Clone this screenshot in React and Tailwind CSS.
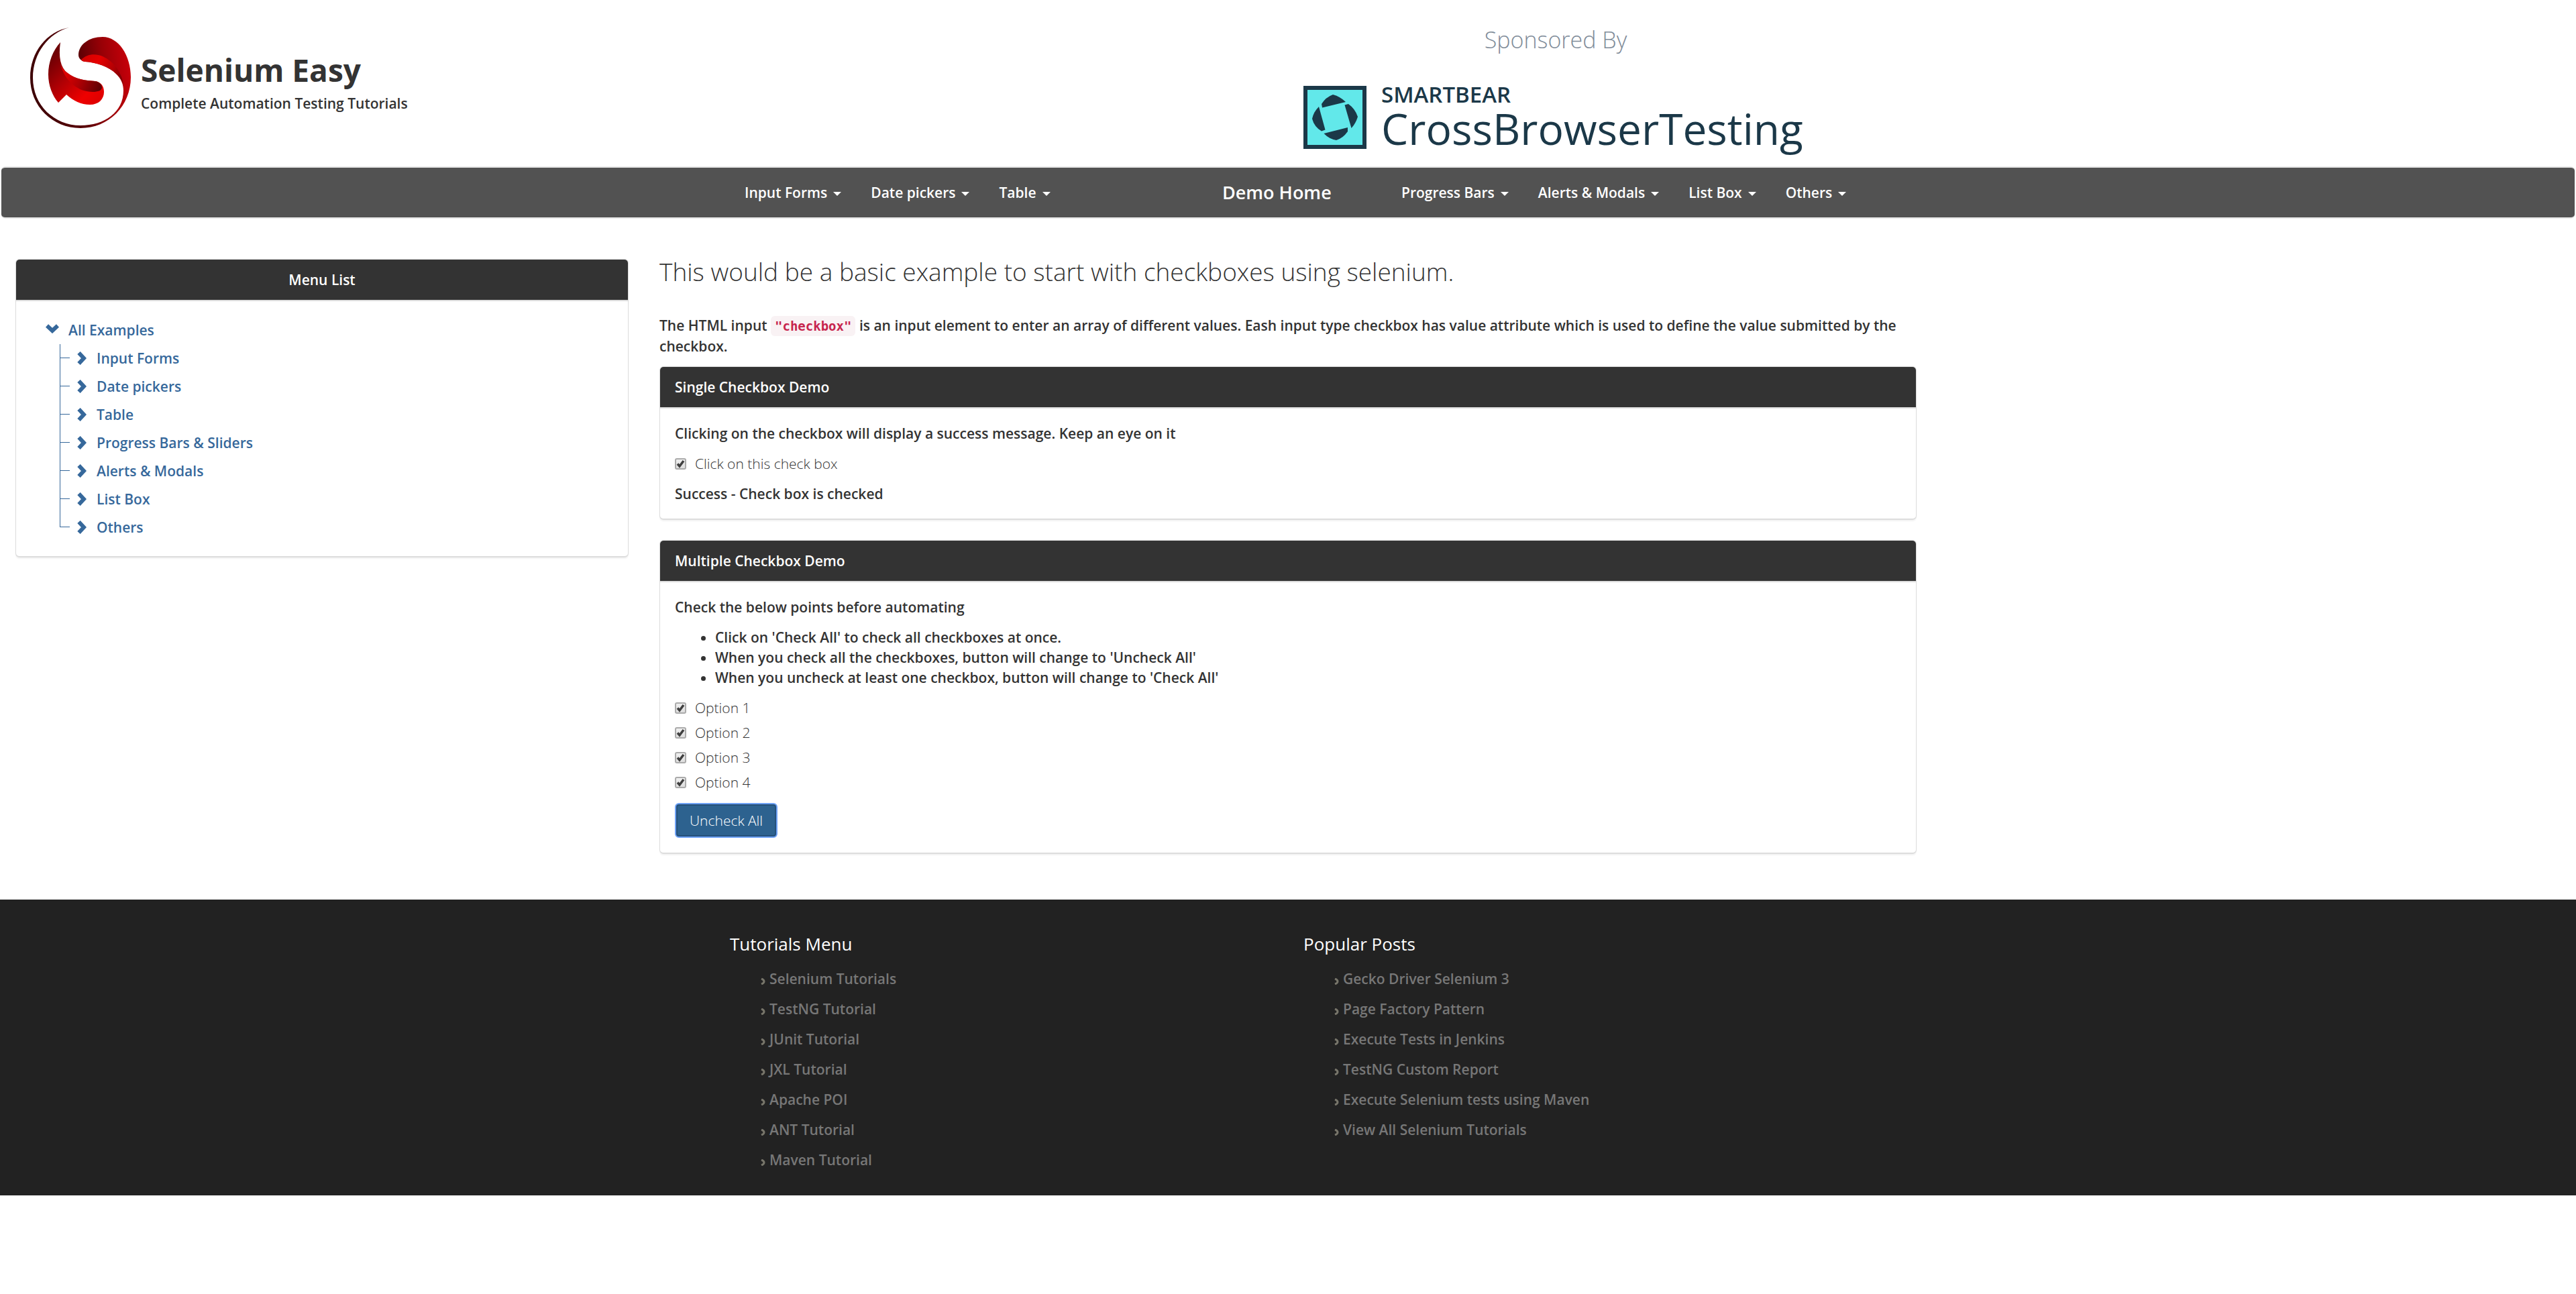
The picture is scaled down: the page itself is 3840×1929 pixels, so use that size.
import { useState } from "react";

const leftNav = ["Input Forms", "Date pickers", "Table"];
const rightNav = ["Progress Bars", "Alerts & Modals", "List Box", "Others"];
const treeItems = [
  "Input Forms",
  "Date pickers",
  "Table",
  "Progress Bars & Sliders",
  "Alerts & Modals",
  "List Box",
  "Others",
];
const tutorials = [
  "Selenium Tutorials",
  "TestNG Tutorial",
  "JUnit Tutorial",
  "JXL Tutorial",
  "Apache POI",
  "ANT Tutorial",
  "Maven Tutorial",
];
const posts = [
  "Gecko Driver Selenium 3",
  "Page Factory Pattern",
  "Execute Tests in Jenkins",
  "TestNG Custom Report",
  "Execute Selenium tests using Maven",
  "View All Selenium Tutorials",
];

function SiteLogo() {
  return (
    <svg viewBox="0 0 150 150" className="size-[150px] shrink-0" aria-hidden="true">
      <defs>
        <linearGradient id="ring" gradientUnits="userSpaceOnUse" x1="0" y1="80" x2="150" y2="60">
          <stop offset="0" stopColor="#3c0004" />
          <stop offset="0.5" stopColor="#5a0004" />
          <stop offset="0.75" stopColor="#9a0006" />
          <stop offset="1" stopColor="#c8000a" />
        </linearGradient>
        <linearGradient id="topFold" gradientUnits="userSpaceOnUse" x1="76" y1="44" x2="142" y2="76">
          <stop offset="0" stopColor="#d00000" />
          <stop offset="0.35" stopColor="#e60000" />
          <stop offset="0.7" stopColor="#b00004" />
          <stop offset="1" stopColor="#6a0004" />
        </linearGradient>
        <linearGradient id="inner" gradientUnits="userSpaceOnUse" x1="26" y1="50" x2="95" y2="115">
          <stop offset="0" stopColor="#6e0004" />
          <stop offset="0.4" stopColor="#b00004" />
          <stop offset="0.8" stopColor="#ee0000" />
          <stop offset="1" stopColor="#e00000" />
        </linearGradient>
        <linearGradient id="innerFold" gradientUnits="userSpaceOnUse" x1="48" y1="66" x2="106" y2="92">
          <stop offset="0" stopColor="#e80000" />
          <stop offset="0.45" stopColor="#b00004" />
          <stop offset="1" stopColor="#5c0004" />
        </linearGradient>
      </defs>
      <path
        d="M58 0C25 6 0 36 0 75c0 42 33 75 75 75s75-33 75-76c0-32-18-60-42-60-21 0-36 12-36 27 0 5 4 9 10 10 16 1 35 7 46 18 8 8 11 16 11 25 0 32-28 52-64 52C36 146 4 116 4 75 4 38 28 8 58 0Z"
        fill="url(#ring)"
      />
      <path d="M76 48c8-8 20-10 32-5 18 8 31 28 31 46 0-7-4-14-11-20C117 58 98 52 82 51c-3 0-5-1-6-3Z" fill="url(#topFold)" />
      <path
        d="M45 22C34 34 27 51 27 70c0 16 6 32 15 42l12-12c10 9 22 15 35 15 13 0 21-8 21-19 0-9-5-15-13-16-15-1-30-3-41-12-11-8-14-24-11-46Z"
        fill="url(#inner)"
      />
      <path d="M45 54c2 6 6 11 11 14 11 9 26 11 41 12 6 1 10 5 10 9 0 5-6 7-14 7-20 0-41-14-48-42Z" fill="url(#innerFold)" />
    </svg>
  );
}

function SponsorMark() {
  return (
    <svg viewBox="0 0 94 94" className="size-[94px] shrink-0" aria-hidden="true">
      <rect width="94" height="94" fill="#1b3848" />
      <rect x="6" y="6" width="82" height="82" fill="#62e8ea" />
      <g fill="#1b3848">
        <path d="M44 13Q55 16 63 24L28 32.500L27 27Q33 17 44 13Z" />
        <path d="M67 27Q77 34 81 46Q78 56 71.500 63L61.500 28.500Z" />
        <path d="M66 62L66 68Q59 78 49 81Q38 79 30.500 71Z" />
        <path d="M23 31L32.500 65.500L27 67.500Q16 61 13 49Q15 39 23 31Z" />
      </g>
    </svg>
  );
}

function NavLinks({ items }) {
  return (
    <ul className="flex items-center gap-11 text-[21px] font-semibold">
      {items.map((item) => (
        <li key={item}>
          <a href="#" className="flex items-center gap-[9px] whitespace-nowrap">
            {item}
            <svg viewBox="0 0 12 6" className="mt-1 h-1.5 w-3" aria-hidden="true">
              <path d="M0 0h12L6 6Z" fill="currentColor" />
            </svg>
          </a>
        </li>
      ))}
    </ul>
  );
}

function Panel({ title, centered, children }) {
  return (
    <section className="rounded-md border border-b-2 border-[#ddd] bg-white shadow-[0_2px_2px_rgba(0,0,0,0.05)]">
      <h3
        className={
          "rounded-t-[5px] border-b-2 border-[#ddd] bg-[#333] px-[22px] py-[15px] font-semibold text-white" +
          (centered ? " text-center" : "")
        }
      >
        {title}
      </h3>
      <div className="px-[22px] py-[22px]">{children}</div>
    </section>
  );
}

function CheckItem({ label, checked, onChange }) {
  return (
    <label className="flex items-center gap-[13px] font-light">
      <span className="grid">
        <input
          type="checkbox"
          checked={checked}
          onChange={onChange}
          className="peer col-start-1 row-start-1 size-[17px] appearance-none rounded-[3px] border-2 border-[#ababab] bg-linear-to-b from-[#f0f0f0] to-[#dedede]"
        />
        <svg
          viewBox="0 0 17 17"
          className="pointer-events-none invisible col-start-1 row-start-1 size-[17px] peer-checked:visible"
          aria-hidden="true"
        >
          <path d="M4 8.500l3 3.500L13 4" fill="none" stroke="#3f3f3f" strokeWidth="3.500" />
        </svg>
      </span>
      {label}
    </label>
  );
}

function FooterColumn({ title, items }) {
  return (
    <div className="px-[23px]">
      <h4 className="text-[26px] leading-[30px] text-white">{title}</h4>
      <ul className="mt-[22px] flex flex-col gap-[15px] pl-[46px] font-semibold text-[#777]">
        {items.map((item) => (
          <li key={item}>
            <a href="#" className="flex items-center gap-1.5">
              <svg viewBox="0 0 7 10" className="mt-2 h-2.5 w-[7px]" aria-hidden="true">
                <path d="M1 1q4 1.500 4 4T1 9" fill="none" stroke="#77756a" strokeWidth="3" />
              </svg>
              {item}
            </a>
          </li>
        ))}
      </ul>
    </div>
  );
}

export default function App() {
  const [single, setSingle] = useState(true);
  const [options, setOptions] = useState([true, true, true, true]);
  const all = options.every(Boolean);

  return (
    <div className="min-h-screen bg-white font-['Open_Sans',sans-serif] text-[21px] leading-[30px] text-[#333]">
      <header className="grid h-[248px] grid-cols-2">
        <div className="flex items-start gap-[15px] pt-[41px] pl-[45px]">
          <SiteLogo />
          <div className="pt-7">
            <h1 className="text-[46px] leading-[70px] font-bold">Selenium Easy</h1>
            <p className="font-semibold">Complete Automation Testing Tutorials</p>
          </div>
        </div>
        <div className="pt-[39px] pl-[23px] text-[#1b3848]">
          <div className="flex w-[752px] flex-col">
            <p className="text-center text-[34px] leading-[40px] font-light text-[#7f8c99]">Sponsored By</p>
            <a href="#" className="mt-[41px] flex items-end gap-[22px]">
              <SponsorMark />
              <span className="flex flex-col">
                <span className="text-[33px] leading-[42px] font-semibold">SMARTBEAR</span>
                <span className="text-[64px] leading-[60px]">CrossBrowserTesting</span>
              </span>
            </a>
          </div>
        </div>
      </header>

      <nav className="mx-0.5 rounded-md border-y-2 border-[#e7e7e7] bg-[#525252] text-white">
        <div className="mx-auto grid h-[74px] max-w-[1710px] grid-cols-[712px_267px_1fr] items-center pl-[45px]">
          <NavLinks items={leftNav} />
          <a href="#" className="text-[27px] font-semibold">
            Demo Home
          </a>
          <NavLinks items={rightNav} />
        </div>
      </nav>

      <main className="grid grid-cols-4 items-start pt-[60px] pb-[68px]">
        <aside className="px-[23px]">
          <Panel title="Menu List" centered>
            <div className="pl-[22px] leading-[42px] font-semibold text-[#36689b]">
              <a href="#" className="flex items-center gap-3.5">
                <svg viewBox="0 0 20 14" className="-mt-1 h-3.5 w-5" aria-hidden="true">
                  <path d="M2 2.500l8 7.500 8-7.500" fill="none" stroke="currentColor" strokeWidth="6" />
                </svg>
                All Examples
              </a>
              <ul className="pl-[21px]">
                {treeItems.map((item, i) => (
                  <li key={item} className="flex">
                    <span className="flex w-[15px] flex-col" aria-hidden="true">
                      <span className="h-[21px] border-b border-l border-[#36689b]" />
                      <span className={i < treeItems.length - 1 ? "h-[21px] border-l border-[#36689b]" : "h-[21px]"} />
                    </span>
                    <a href="#" className="flex items-center gap-[15px] pl-[11px]">
                      <svg viewBox="0 0 14 20" className="h-5 w-3.5" aria-hidden="true">
                        <path d="M2.500 2l7.500 8-7.500 8" fill="none" stroke="currentColor" strokeWidth="6" />
                      </svg>
                      {item}
                    </a>
                  </li>
                ))}
              </ul>
            </div>
          </Panel>
        </aside>

        <div className="col-span-2 px-[23px]">
          <h2 className="text-[37px] leading-[38px] font-light">
            This would be a basic example to start with checkboxes using selenium.
          </h2>
          <p className="mt-[46px] font-semibold">
            The HTML input{" "}
            <code className="rounded-md bg-[#f9f2f4] px-1.5 py-1 font-['DejaVu_Sans_Mono',monospace] text-[19px] text-[#c7254e]">
              "checkbox"
            </code>{" "}
            is an input element to enter an array of different values. Eash input type checkbox has value attribute
            which is used to define the value submitted by the checkbox.
          </p>

          <div className="mt-[15px] flex flex-col gap-[30px]">
            <Panel title="Single Checkbox Demo">
              <div className="flex flex-col gap-[15px]">
                <p className="font-semibold">
                  Clicking on the checkbox will display a success message. Keep an eye on it
                </p>
                <CheckItem label="Click on this check box" checked={single} onChange={() => setSingle(!single)} />
                {single && <p className="font-semibold">Success - Check box is checked</p>}
              </div>
            </Panel>

            <Panel title="Multiple Checkbox Demo">
              <p className="font-semibold">Check the below points before automating</p>
              <ul className="mt-[15px] list-disc pl-[60px] font-semibold">
                <li>Click on 'Check All' to check all checkboxes at once.</li>
                <li>When you check all the checkboxes, button will change to 'Uncheck All'</li>
                <li>When you uncheck at least one checkbox, button will change to 'Check All'</li>
              </ul>
              <div className="mt-[15px] flex flex-col gap-[7px]">
                {options.map((on, i) => (
                  <CheckItem
                    key={i}
                    label={"Option " + (i + 1)}
                    checked={on}
                    onChange={() => setOptions(options.map((o, j) => (j === i ? !o : o)))}
                  />
                ))}
              </div>
              <button
                type="button"
                onClick={() => setOptions(options.map(() => !all))}
                className="mt-4 block h-[52px] rounded-md border-2 border-[#6ea2f5] bg-[#2d628f] px-5 font-light text-white shadow-[inset_0_0_0_2px_#24507a]"
              >
                {all ? "Uncheck All" : "Check All"}
              </button>
            </Panel>
          </div>
        </div>
      </main>

      <footer className="bg-[#222] pt-[51px] pb-[38px]">
        <div className="mx-auto grid max-w-[1710px] grid-cols-2">
          <FooterColumn title="Tutorials Menu" items={tutorials} />
          <FooterColumn title="Popular Posts" items={posts} />
        </div>
      </footer>
    </div>
  );
}
